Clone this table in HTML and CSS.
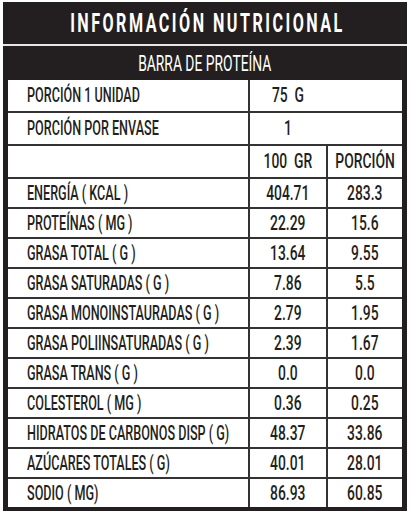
FILE: index.html
```html
<!DOCTYPE html>
<html lang="es">
<head>
<meta charset="utf-8">
<title>Información nutricional</title>
<link rel="stylesheet" href="styles.css">
</head>
<body>
<div class="panel">
  <div class="title"><span class="t">INFORMACIÓN NUTRICIONAL</span></div>
  <div class="sub"><span class="t">BARRA DE PROTEÍNA</span></div>
  <div class="grid">
    <div class="c l"><span class="t">PORCIÓN 1 UNIDAD</span></div>
    <div class="c v span2"><span class="t">75&nbsp; G</span></div>

    <div class="c l"><span class="t">PORCIÓN POR ENVASE</span></div>
    <div class="c v span2"><span class="t">1</span></div>

    <div class="c l"></div>
    <div class="c v"><span class="t">100&nbsp; GR</span></div>
    <div class="c v"><span class="t">PORCIÓN</span></div>

    <div class="c l"><span class="t">ENERGÍA ( KCAL )</span></div>
    <div class="c v"><span class="t">404.71</span></div>
    <div class="c v"><span class="t">283.3</span></div>

    <div class="c l"><span class="t">PROTEÍNAS ( MG )</span></div>
    <div class="c v"><span class="t">22.29</span></div>
    <div class="c v"><span class="t">15.6</span></div>

    <div class="c l"><span class="t">GRASA TOTAL ( G )</span></div>
    <div class="c v"><span class="t">13.64</span></div>
    <div class="c v"><span class="t">9.55</span></div>

    <div class="c l"><span class="t">GRASA SATURADAS ( G )</span></div>
    <div class="c v"><span class="t">7.86</span></div>
    <div class="c v"><span class="t">5.5</span></div>

    <div class="c l"><span class="t">GRASA MONOINSTAURADAS ( G )</span></div>
    <div class="c v"><span class="t">2.79</span></div>
    <div class="c v"><span class="t">1.95</span></div>

    <div class="c l"><span class="t">GRASA POLIINSATURADAS ( G )</span></div>
    <div class="c v"><span class="t">2.39</span></div>
    <div class="c v"><span class="t">1.67</span></div>

    <div class="c l"><span class="t">GRASA TRANS ( G )</span></div>
    <div class="c v"><span class="t">0.0</span></div>
    <div class="c v"><span class="t">0.0</span></div>

    <div class="c l"><span class="t">COLESTEROL ( MG )</span></div>
    <div class="c v"><span class="t">0.36</span></div>
    <div class="c v"><span class="t">0.25</span></div>

    <div class="c l"><span class="t">HIDRATOS DE CARBONOS DISP ( G)</span></div>
    <div class="c v"><span class="t">48.37</span></div>
    <div class="c v"><span class="t">33.86</span></div>

    <div class="c l"><span class="t">AZÚCARES TOTALES ( G)</span></div>
    <div class="c v"><span class="t">40.01</span></div>
    <div class="c v"><span class="t">28.01</span></div>

    <div class="c l"><span class="t">SODIO ( MG)</span></div>
    <div class="c v"><span class="t">86.93</span></div>
    <div class="c v"><span class="t">60.85</span></div>
  </div>
</div>
</body>
</html>
```

FILE: styles.css
```css
html, body {
  margin: 0;
  padding: 0;
  background: #ffffff;
}

body {
  padding: 2px 0 0 3px;
  font-family: Roboto, "Liberation Sans", sans-serif;
  color: #231f20;
}

.panel {
  width: 404px;
  background: #231f20;
  padding: 0 5px 4px 5px;
  box-sizing: border-box;
}

.t {
  display: inline-block;
  white-space: nowrap;
}

.title {
  height: 42px;
  margin: 0 -5px;
  border-bottom: 2px solid #e6e6e6;
  display: flex;
  align-items: center;
  justify-content: center;
  color: #ffffff;
  font-weight: 700;
  font-size: 26px;
  letter-spacing: 4px;
}

.title .t {
  transform: scaleX(0.62);
  transform-origin: center;
  margin-right: -4px;
}

.sub {
  height: 34px;
  display: flex;
  align-items: center;
  justify-content: center;
  color: #ffffff;
  font-size: 22px;
  font-weight: 400;
}

.sub .t {
  transform: scaleX(0.63);
  transform-origin: center;
}

.grid {
  display: grid;
  grid-template-columns: 240px 76px 74px;
  grid-template-rows: 31px 31px 31px repeat(11, 28px);
  gap: 2px;
  background: #333333;
}

.c {
  background: #ffffff;
  display: flex;
  align-items: center;
  font-size: 21px;
  font-weight: 500;
  line-height: 1;
}

.l {
  padding-left: 19px;
}

.l .t {
  transform: scaleX(0.6);
  transform-origin: left center;
}

.v {
  justify-content: center;
}

.v .t {
  transform: scaleX(0.66);
  transform-origin: center;
}

.span2 {
  grid-column: span 2;
  justify-content: flex-start;
}

.span2 .t {
  width: 76px;
  text-align: center;
}
```
